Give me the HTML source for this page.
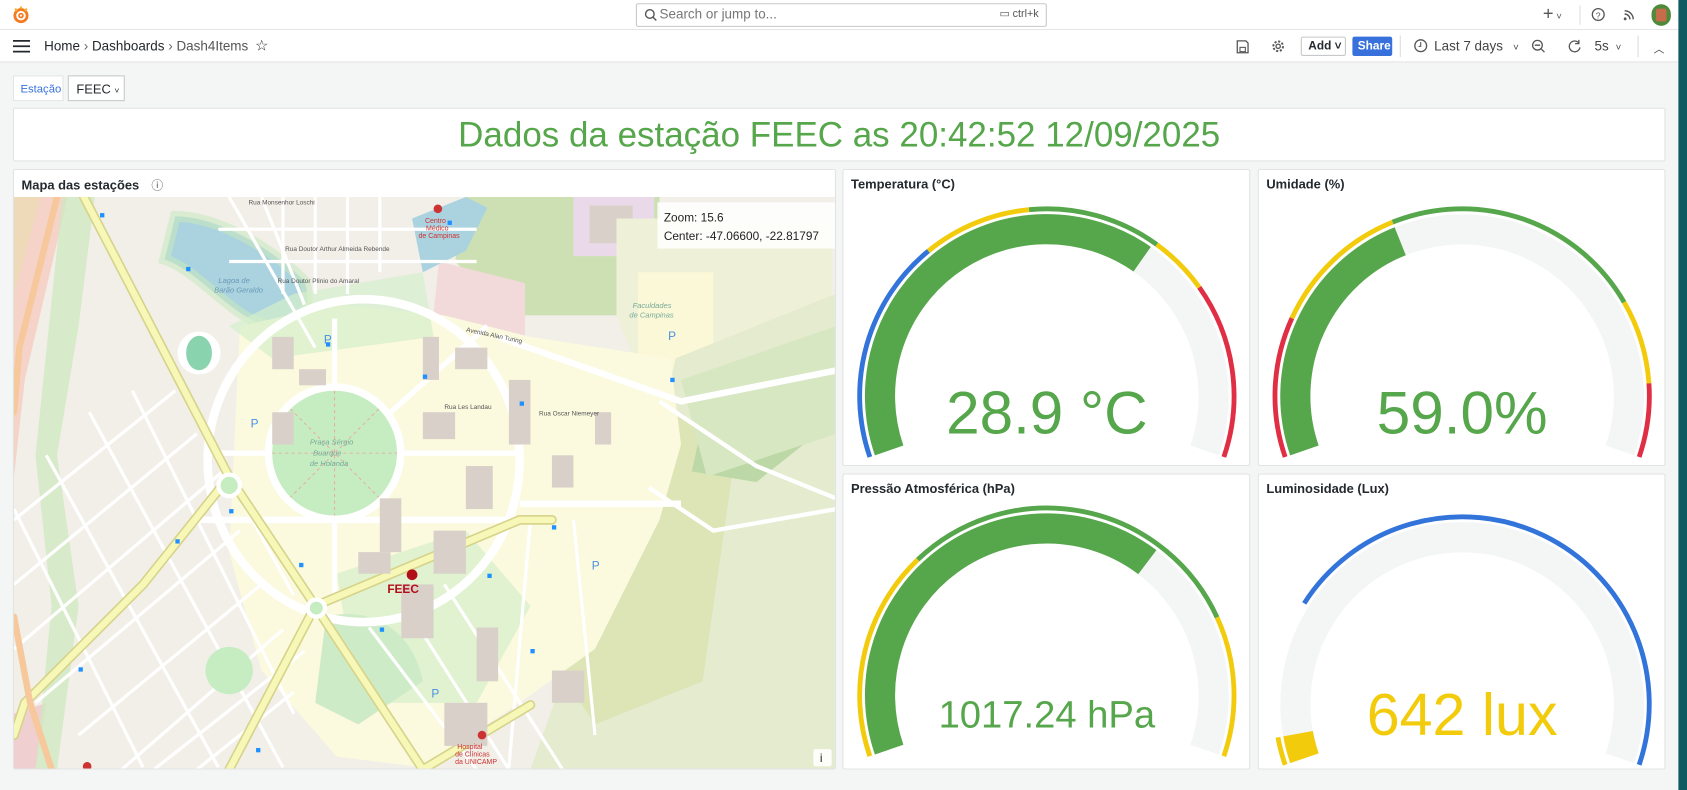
<!DOCTYPE html>
<html><head><meta charset="utf-8">
<style>
*{box-sizing:border-box;margin:0;padding:0}
html,body{width:1687px;height:790px;overflow:hidden;background:#f4f5f5;font-family:"Liberation Sans",sans-serif}
#w{position:absolute;left:0;top:0;width:1568px;height:734px;overflow:hidden;transform:scale(1.0759,1.0763);transform-origin:0 0;background:#f4f5f5;color:#24292e}
.a{position:absolute}
.bar{left:0;width:1568px;background:#fff;border-bottom:1px solid #e4e5e6}
.panel{position:absolute;background:#fff;border:1px solid #e2e3e4;border-radius:2px}
.ph{position:absolute;left:7px;top:6px;font-size:12px;font-weight:bold;color:#24292e}
.t{font-size:12.5px;color:#24292e}
</style></head><body><div id="w">
<div class="a bar" style="top:0;height:28px">
 <svg class="a" style="left:11px;top:5px" width="17" height="18" viewBox="0 0 17 18"><circle cx="8.5" cy="9.5" r="7" fill="#f47a20"/><circle cx="8.5" cy="9.5" r="3.5" fill="none" stroke="#fff" stroke-width="1.8"/><circle cx="8.5" cy="9.5" r="1" fill="#fff"/><path d="M3 3l2 2M8.5 1v2M14 3l-2 2" stroke="#f9b233" stroke-width="2"/></svg>
 <div class="a" style="left:591px;top:3px;width:382px;height:22px;border:1px solid #c7c8ca;border-radius:2px"></div>
 <svg class="a" style="left:599px;top:8px" width="12" height="12"><circle cx="5" cy="5" r="4" fill="none" stroke="#555" stroke-width="1.3"/><path d="M8 8l3 3" stroke="#555" stroke-width="1.3"/></svg>
 <div class="a" style="left:613px;top:6px;font-size:12.5px;color:#777">Search or jump to...</div>
 <div class="a" style="left:929px;top:8px;font-size:10px;color:#555">▭ ctrl+k</div>
 <div class="a" style="left:1434px;top:3px;font-size:17px;color:#555">+<span style="font-size:9px"> ˅</span></div>
 <div class="a" style="left:1468px;top:5px;width:1px;height:18px;background:#ddd"></div>
 <svg class="a" style="left:1479px;top:7px" width="13" height="13"><circle cx="6.5" cy="6.5" r="5.5" fill="none" stroke="#555" stroke-width="1.2"/><text x="4.2" y="10" font-size="8" fill="#555" font-family="Liberation Sans">?</text></svg>
 <svg class="a" style="left:1508px;top:8px" width="12" height="12"><path d="M2 2a8 8 0 0 1 8 8M2 5a5 5 0 0 1 5 5" stroke="#555" fill="none" stroke-width="1.3"/><circle cx="2.5" cy="9.5" r="1.3" fill="#555"/></svg>
 <div class="a" style="left:1535px;top:4px;width:18px;height:20px;border-radius:9px;background:#4d8a3a"><div style="margin:4px 4px;width:10px;height:12px;background:#c56c4a;border-radius:2px"></div></div>
</div>
<div class="a bar" style="top:28px;height:30px">
 <svg class="a" style="left:12px;top:9px" width="16" height="12"><path d="M0 1h16M0 6h16M0 11h16" stroke="#24292e" stroke-width="1.6"/></svg>
 <div class="a t" style="left:41px;top:8px">Home <span style="color:#666">›</span> Dashboards <span style="color:#666">›</span> <span style="color:#555">Dash4Items</span></div>
 <div class="a" style="left:237px;top:6px;font-size:14px;color:#24292e">☆</div>
 <svg class="a" style="left:1149px;top:9px" width="12" height="13"><path d="M1 1h8l2 2v9H1z" fill="none" stroke="#555" stroke-width="1.2"/><rect x="3.5" y="7" width="5" height="4" fill="none" stroke="#555"/></svg>
 <svg class="a" style="left:1181px;top:8px" width="14" height="14"><circle cx="7" cy="7" r="4.5" fill="none" stroke="#555" stroke-width="1.8" stroke-dasharray="2 1.5"/><circle cx="7" cy="7" r="2" fill="none" stroke="#555" stroke-width="1.2"/></svg>
 <div class="a" style="left:1209px;top:6px;width:42px;height:18px;border:1px solid #c7c8ca;border-radius:2px;font-size:11px;font-weight:bold;padding:2px 0 0 6px">Add ˅</div>
 <div class="a" style="left:1257px;top:6px;width:37px;height:18px;background:#3871dc;border-radius:2px;font-size:11px;color:#fff;font-weight:bold;padding:3px 0 0 5px">Share</div>
 <div class="a" style="left:1301px;top:5px;width:1px;height:20px;background:#ddd"></div>
 <svg class="a" style="left:1314px;top:8px" width="13" height="13"><circle cx="6.5" cy="6.5" r="5.5" fill="none" stroke="#555" stroke-width="1.2"/><path d="M6.5 3v4h-2" stroke="#555" fill="none"/></svg>
 <div class="a" style="left:1333px;top:8px;font-size:12.5px;color:#444">Last 7 days <span style="font-size:9px;margin-left:6px">˅</span></div>
 <svg class="a" style="left:1423px;top:8px" width="14" height="14"><circle cx="6" cy="6" r="4.5" fill="none" stroke="#555" stroke-width="1.2"/><path d="M3.5 6h5M9.5 9.5l3 3" stroke="#555" stroke-width="1.2"/></svg>
 <svg class="a" style="left:1457px;top:8px" width="13" height="14"><path d="M10.5 4a5 5 0 1 0 1 4M10.5 1v3.5H7" stroke="#555" fill="none" stroke-width="1.2"/></svg>
 <div class="a" style="left:1482px;top:8px;font-size:12.5px;color:#444">5s <span style="font-size:9px;margin-left:3px">˅</span></div>
 <div class="a" style="left:1522px;top:5px;width:1px;height:20px;background:#ddd"></div>
 <div class="a" style="left:1537px;top:9px;font-size:10px;color:#444">︿</div>
</div>
<div class="a" style="left:12px;top:70px;width:47px;height:24px;background:#fff;border:1px solid #e4e5e6;font-size:10.5px;color:#3871dc;padding:6px 0 0 6px">Estação</div>
<div class="a" style="left:63px;top:70px;width:53px;height:24px;background:#fff;border:1px solid #c7c8ca;font-size:12px;padding:5px 0 0 7px">FEEC <span style="font-size:8px">˅</span></div>
<div class="panel" style="left:12px;top:100px;width:1536px;height:50px"><div style="position:absolute;left:0;right:0;top:6px;text-align:center;font-size:32.5px;color:#56a64b">Dados da estação FEEC as 20:42:52 12/09/2025</div></div>
<div class="panel" style="left:12px;top:157px;width:765px;height:558px;overflow:hidden">
 <div class="ph">Mapa das estações <span style="font-weight:normal;color:#555;margin-left:8px;font-size:11px">ⓘ</span></div>
 <svg class="a" style="left:0;top:25px" width="764" height="532" viewBox="0 0 764 532">
  <rect width="764" height="532" fill="#f2efe9"/>
  <path d="M0 0h50L10 170 0 260z" fill="#f5d3c8"/>
  <path d="M0 0h25L0 90z" fill="#eed9b8"/>
  <path d="M0 600L0 480 30 470 20 532z" fill="#f0cfd0"/>
  <path d="M45 0h30L60 120 40 240 60 380 40 532H20L35 380 20 240z" fill="#cfe8c0" opacity=".8"/>
  <path d="M420 0h180v110H460L410 60z" fill="#cde0b4"/>
  <path d="M520 0h75v55h-75z" fill="#ead9e8"/><rect x="535" y="8" width="40" height="35" fill="#d9d0c9"/>
  <path d="M395 60l80 20v85l-90 -10z" fill="#f2dadb"/>
  <path d="M560 20h200v220L620 260 560 110z" fill="#eef0d8"/>
  <path d="M580 70h70v150h-70z" fill="#fbf8d8"/>
  <path d="M615 150L764 90v442H480L520 420 580 300z" fill="#e4ebce"/>
  <path d="M560 250l60-50 50 40-30 210-100 40-40-60z" fill="#dde4b6"/>
  <path d="M640 210l60-25 40 40-50 40-60-10z" fill="#bcd8a6"/>
  <path d="M620 170l144-50v100l-120 40z" fill="#d7e7c2"/>
  <path d="M150 18c40 0 90 30 120 60 10 30-10 50-40 40s-60-50-90-60z" fill="#aad3df"/>
  <path d="M150 18c40 0 90 30 120 60 10 30-10 50-40 40s-60-50-90-60z" fill="none" stroke="#c8e8c0" stroke-width="10" opacity=".6"/>
  <path d="M370 20l50-20 20 10-20 40-40 20z" fill="#aad3df"/>
  <path d="M210 120L300 100 400 110 480 130 610 150 620 230 600 300 540 420 470 470 380 530 300 520 230 440 200 330z" fill="#fbf9de"/>
  <path d="M200 120l60-30 120-20 10 60-150 20z" fill="#d4efcb" opacity=".7"/>
  <path d="M300 350l120-40 60 70-50 90-110 0z" fill="#d4efcb" opacity=".7"/>
  <path d="M290 390c40-10 80 10 90 60l-60 40-40-20z" fill="#cdebc6"/>
  <ellipse cx="325" cy="245" rx="145" ry="150" fill="none" stroke="#fff" stroke-width="8"/>
  <circle cx="298" cy="238" r="65" fill="#fff"/>
  <circle cx="298" cy="238" r="58" fill="#c6ecc1"/>
  <path d="M298 180v116M240 238h116M257 197l82 82M339 197l-82 82" stroke="#f0a0a0" stroke-width=".8" stroke-dasharray="3 3" fill="none"/>
  <path d="M298 173v-60M298 303v70M233 238H180M363 238h110M350 200l90-80" stroke="#fff" stroke-width="5" fill="none"/>
  <path d="M470 300l-300 0M470 285h150M450 130l170 60 150 -30" stroke="#fff" stroke-width="6" fill="none"/>
  <path d="M590 270l60 40 114 -20M600 190l90 60 74 30" stroke="#fff" stroke-width="4" fill="none"/>
  <g stroke="#fff" stroke-width="3" fill="none">
   <path d="M0 360l170-140M0 420l200-170M20 470l190-160M60 500l170-140M100 532l150-130M130 532l140-110M0 300l150-120"/>
   <path d="M70 200l180 330M30 240l160 290M110 180l150 300M150 170l110 200M0 290l120 240"/>
   <path d="M330 400l100 132M370 390l90 142M400 360l110 172M260 460l-90 72"/>
   <path d="M200 0l80 140M230 0l40 100M250 0v90M280 0v90M310 0v90M340 0v70M200 60h230M190 30h240"/>
   <path d="M480 300l-20 230M520 300l20 200"/>
  </g>
  <g fill="none" stroke-linecap="round">
   <path d="M65 0L200 260 280 380 380 532M200 260L120 360 10 470 0 500M280 380L200 532M280 380L470 300 500 300M380 532l100-60" stroke="#d6d38a" stroke-width="9"/>
   <path d="M65 0L200 260 280 380 380 532M200 260L120 360 10 470 0 500M280 380L200 532M280 380L470 300 500 300M380 532l100-60" stroke="#f7f8b8" stroke-width="6"/>
   <path d="M40 0L5 140 0 200" stroke="#f6c89c" stroke-width="6"/>
   <path d="M0 390l15 80 20 62" stroke="#f6c89c" stroke-width="6"/>
  </g>
  <circle cx="172" cy="145" r="20" fill="#fff"/><ellipse cx="172" cy="145" rx="12" ry="16" fill="#8ad3af"/>
  <circle cx="200" cy="268" r="10" fill="#c6ecc1" stroke="#fff" stroke-width="4"/>
  <circle cx="281" cy="382" r="8" fill="#c6ecc1" stroke="#fff" stroke-width="4"/>
  <circle cx="200" cy="440" r="22" fill="#c6ecc1"/>
  <g fill="#d9d0c9">
   <rect x="240" y="130" width="20" height="30"/><rect x="265" y="160" width="25" height="15"/><rect x="380" y="130" width="15" height="40"/><rect x="410" y="140" width="30" height="20"/><rect x="460" y="170" width="20" height="60"/><rect x="380" y="200" width="30" height="25"/><rect x="420" y="250" width="25" height="40"/><rect x="340" y="280" width="20" height="50"/><rect x="390" y="310" width="30" height="40"/><rect x="430" y="400" width="20" height="50"/><rect x="400" y="470" width="40" height="40"/><rect x="500" y="440" width="30" height="30"/><rect x="240" y="200" width="20" height="30"/><rect x="500" y="240" width="20" height="30"/><rect x="540" y="200" width="15" height="30"/><rect x="320" y="330" width="30" height="20"/><rect x="360" y="360" width="30" height="50"/>
  </g>
  <g fill="#1e90ff"><rect x="80" y="15" width="4" height="4"/><rect x="290" y="135" width="4" height="4"/><rect x="380" y="165" width="4" height="4"/><rect x="470" y="190" width="4" height="4"/><rect x="500" y="305" width="4" height="4"/><rect x="610" y="168" width="4" height="4"/><rect x="440" y="350" width="4" height="4"/><rect x="265" y="340" width="4" height="4"/><rect x="150" y="318" width="4" height="4"/><rect x="200" y="290" width="4" height="4"/><rect x="340" y="400" width="4" height="4"/><rect x="480" y="420" width="4" height="4"/><rect x="225" y="512" width="4" height="4"/><rect x="60" y="437" width="4" height="4"/><rect x="160" y="65" width="4" height="4"/><rect x="403" y="22" width="4" height="4"/></g>
  <g font-family="Liberation Sans" font-size="11" fill="#4a90e2"><text x="288" y="136">P</text><text x="220" y="214">P</text><text x="608" y="133">P</text><text x="537" y="346">P</text><text x="388" y="465">P</text></g>
  <g font-family="Liberation Sans" font-size="6" fill="#555"><text x="218" y="7">Rua Monsenhor Loschi</text><text x="252" y="50">Rua Doutor Arthur Almeida Rebende</text><text x="245" y="80">Rua Doutor Plínio do Amaral</text><text x="420" y="125" transform="rotate(12 420 125)">Avenida Alan Turing</text><text x="488" y="203">Rua Oscar Niemeyer</text><text x="400" y="197">Rua Les Landau</text></g>
  <g font-family="Liberation Sans" font-size="7" font-style="italic" fill="#7a9"><text x="275" y="230">Praça Sérgio</text><text x="278" y="240">Buarque</text><text x="275" y="250">de Holanda</text><text x="575" y="103">Faculdades</text><text x="572" y="112">de Campinas</text><text x="190" y="80" fill="#6a98b8">Lagoa de</text><text x="186" y="89" fill="#6a98b8">Barão Geraldo</text></g>
  <g font-family="Liberation Sans" font-size="6.5" fill="#c33"><circle cx="394" cy="11" r="4"/><text x="382" y="24">Centro</text><text x="383" y="31">Médico</text><text x="376" y="38">de Campinas</text><circle cx="435" cy="500" r="4"/><text x="412" y="513">Hospital</text><text x="410" y="520">de Clínicas</text><text x="410" y="527">da UNICAMP</text><circle cx="68" cy="529" r="4"/></g>
  <circle cx="370" cy="351" r="5" fill="#b30d17"/>
  <text x="347" y="368" font-family="Liberation Sans" font-size="11" font-weight="bold" fill="#b30d17">FEEC</text>
  <rect x="598" y="5" width="166" height="43" fill="#fff" opacity=".85"/>
  <text x="604" y="23" font-family="Liberation Sans" font-size="11" fill="#222">Zoom:   15.6</text>
  <text x="604" y="40" font-family="Liberation Sans" font-size="11" fill="#222">Center: -47.06600, -22.81797</text>
  <rect x="743" y="513" width="17" height="16" rx="2" fill="#fff" opacity=".9"/>
  <text x="749" y="525" font-family="Liberation Sans" font-size="11" fill="#222">i</text>
 </svg>
</div>
<div class="panel" style="left:783px;top:157px;width:379px;height:276px"><div class="ph">Temperatura (°C)</div><svg class="a" style="left:0;top:0" width="378" height="275" id="g1"></svg></div>
<div class="panel" style="left:1169px;top:157px;width:379px;height:276px"><div class="ph">Umidade (%)</div><svg class="a" style="left:0;top:0" width="378" height="275" id="g2"></svg></div>
<div class="panel" style="left:783px;top:440px;width:379px;height:275px"><div class="ph">Pressão Atmosférica (hPa)</div><svg class="a" style="left:0;top:0" width="378" height="275" id="g3"></svg></div>
<div class="panel" style="left:1169px;top:440px;width:379px;height:275px"><div class="ph">Luminosidade (Lux)</div><svg class="a" style="left:0;top:0" width="378" height="275" id="g4"></svg></div>
<div class="a" style="left:1560px;top:0;width:8px;height:734px;background:#0e5a62"></div>
</div>
<script>
var B="#3274d9",Y="#f2cc0c",G="#56a64b",R="#e02f44",T="#f4f5f5";
function pt(cx,cy,r,f){var a=(-109+218*f)*Math.PI/180;return [cx+r*Math.sin(a),cy-r*Math.cos(a)];}
function arc(cx,cy,r,f0,f1,col,w){var p=pt(cx,cy,r,f0),q=pt(cx,cy,r,f1),l=(f1-f0)*218>180?1:0;
return '<path d="M'+p[0].toFixed(1)+' '+p[1].toFixed(1)+'A'+r+' '+r+' 0 '+l+' 1 '+q[0].toFixed(1)+' '+q[1].toFixed(1)+'" fill="none" stroke="'+col+'" stroke-width="'+w+'"/>';}
function gauge(id,cy,th,val,vc,txt,fs,ty){var cx=189,s='';
s+=arc(cx,cy,155,0,1,T,28);s+=arc(cx,cy,155,0,val,vc,28);
th.forEach(function(t){s+=arc(cx,cy,174,t[0],t[1],t[2],4.5);});
s+='<text x="'+cx+'" y="'+ty+'" text-anchor="middle" font-family="Liberation Sans" font-size="'+fs+'" fill="'+vc+'">'+txt+'</text>';
document.getElementById(id).innerHTML=s;}
gauge('g1',210,[[0,.32,B],[.32,.475,Y],[.475,.665,G],[.665,.75,Y],[.75,1,R]],.66,G,'28.9 °C',56,245);
gauge('g2',210,[[0,.2,R],[.2,.4,Y],[.4,.775,G],[.775,.895,Y],[.895,1,R]],.40,G,'59.0%',56,245);
gauge('g3',205,[[0,.3,Y],[.3,.8,G],[.8,1,Y]],.67,G,'1017.24 hPa',35.5,235);
gauge('g4',213,[[0,.04,Y],[.236,1,B]],.04,Y,'642 lux',55,242);
</script>
</body></html>
